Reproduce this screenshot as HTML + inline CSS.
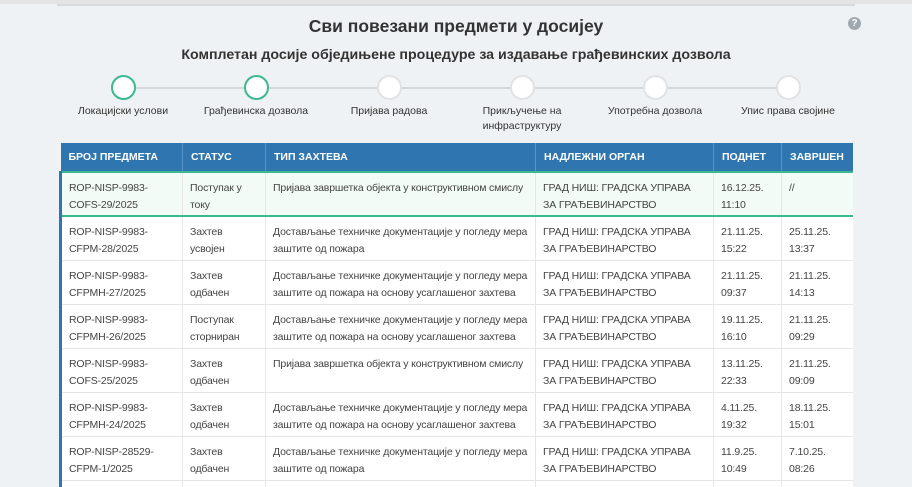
<!DOCTYPE html>
<html><head><meta charset="utf-8"><style>
*{box-sizing:border-box;margin:0;padding:0}
html,body{width:912px;height:487px;overflow:hidden}
body{background:#eef2f5;font-family:"Liberation Sans",sans-serif;color:#333;position:relative}
.top{position:absolute;left:0;top:0;width:912px;height:4px;background:#e4e4e4}
.top2{position:absolute;left:57px;top:4px;width:798px;height:2px;background:#d8dadd}
h1{position:absolute;top:16px;left:0;width:912px;text-align:center;font-size:17.5px;font-weight:bold;color:#333}
h2{position:absolute;top:47px;left:0;width:912px;text-align:center;font-size:14.2px;font-weight:bold;color:#333}
.help{position:absolute;left:848px;top:17px;width:13px;height:13px;border-radius:50%;background:#a0a8b0;color:#fff;font-size:10px;font-weight:bold;text-align:center;line-height:13px}
.line{position:absolute;top:87px;left:123px;width:665px;height:2px;background:#d5d8db}
.c{position:absolute;top:75px;width:25px;height:25px;border-radius:50%;background:#fff;border:2px solid #e0e3e6}
.c.g{border-color:#3cb891}
.lb{position:absolute;top:104px;width:130px;text-align:center;font-size:10.5px;line-height:15px;color:#333}
.wrap{position:absolute;left:59px;top:143px;width:794px;height:344px;overflow:hidden}
table{width:794px;border-collapse:collapse;font-size:10.5px;letter-spacing:-0.15px;table-layout:fixed}
th{background:#2f76b0;color:#fff;text-align:left;font-weight:bold;height:29px;padding:0 8px;border-right:1px solid #5a93c4;white-space:nowrap;letter-spacing:0}
td{background:#fff;vertical-align:top;padding:0 7px;border:1px solid #e6e6e6;color:#444;white-space:nowrap}
td div{height:43px;overflow:hidden;line-height:17px;padding-top:7px}
tr.a td div{height:42px}
tr.a td{background:#f3fbf7;border-top:2px solid #3cb891;border-bottom:2px solid #3cb891}
tr.a td:last-child{border-right:2px solid #3cb891}
tr td:first-child{border-left:3px solid #2f76b0}
</style></head><body>
<div class="top"></div><div class="top2"></div>
<h1>Сви повезани предмети у досијеу</h1>
<div class="help">?</div>
<h2>Комплетан досије обједињене процедуре за издавање грађевинских дозвола</h2>
<div class="line"></div>
<div class="c g" style="left:111px"></div>
<div class="c g" style="left:244px"></div>
<div class="c" style="left:377px"></div>
<div class="c" style="left:510px"></div>
<div class="c" style="left:643px"></div>
<div class="c" style="left:776px"></div>
<div class="lb" style="left:58px">Локацијски услови</div>
<div class="lb" style="left:191px">Грађевинска дозвола</div>
<div class="lb" style="left:324px">Пријава радова</div>
<div class="lb" style="left:457px">Прикључење на<br>инфраструктуру</div>
<div class="lb" style="left:590px">Употребна дозвола</div>
<div class="lb" style="left:723px">Упис права својине</div>
<div class="wrap">
<table>
<colgroup><col style="width:122px"><col style="width:83px"><col style="width:270px"><col style="width:178px"><col style="width:68px"><col style="width:73px"></colgroup>
<tr><th>БРОЈ ПРЕДМЕТА</th><th>СТАТУС</th><th>ТИП ЗАХТЕВА</th><th>НАДЛЕЖНИ ОРГАН</th><th>ПОДНЕТ</th><th>ЗАВРШЕН</th></tr>
<tr class="a"><td><div>ROP-NISP-9983-<br>COFS-29/2025</div></td><td><div>Поступак у<br>току</div></td><td><div>Пријава завршетка објекта у конструктивном смислу</div></td><td><div>ГРАД НИШ: ГРАДСКА УПРАВА<br>ЗА ГРАЂЕВИНАРСТВО</div></td><td><div>16.12.25.<br>11:10</div></td><td><div>//</div></td></tr>
<tr><td><div>ROP-NISP-9983-<br>CFPM-28/2025</div></td><td><div>Захтев<br>усвојен</div></td><td><div>Достављање техничке документације у погледу мера<br>заштите од пожара</div></td><td><div>ГРАД НИШ: ГРАДСКА УПРАВА<br>ЗА ГРАЂЕВИНАРСТВО</div></td><td><div>21.11.25.<br>15:22</div></td><td><div>25.11.25.<br>13:37</div></td></tr>
<tr><td><div>ROP-NISP-9983-<br>CFPMH-27/2025</div></td><td><div>Захтев<br>одбачен</div></td><td><div>Достављање техничке документације у погледу мера<br>заштите од пожара на основу усаглашеног захтева</div></td><td><div>ГРАД НИШ: ГРАДСКА УПРАВА<br>ЗА ГРАЂЕВИНАРСТВО</div></td><td><div>21.11.25.<br>09:37</div></td><td><div>21.11.25.<br>14:13</div></td></tr>
<tr><td><div>ROP-NISP-9983-<br>CFPMH-26/2025</div></td><td><div>Поступак<br>сторниран</div></td><td><div>Достављање техничке документације у погледу мера<br>заштите од пожара на основу усаглашеног захтева</div></td><td><div>ГРАД НИШ: ГРАДСКА УПРАВА<br>ЗА ГРАЂЕВИНАРСТВО</div></td><td><div>19.11.25.<br>16:10</div></td><td><div>21.11.25.<br>09:29</div></td></tr>
<tr><td><div>ROP-NISP-9983-<br>COFS-25/2025</div></td><td><div>Захтев<br>одбачен</div></td><td><div>Пријава завршетка објекта у конструктивном смислу</div></td><td><div>ГРАД НИШ: ГРАДСКА УПРАВА<br>ЗА ГРАЂЕВИНАРСТВО</div></td><td><div>13.11.25.<br>22:33</div></td><td><div>21.11.25.<br>09:09</div></td></tr>
<tr><td><div>ROP-NISP-9983-<br>CFPMH-24/2025</div></td><td><div>Захтев<br>одбачен</div></td><td><div>Достављање техничке документације у погледу мера<br>заштите од пожара на основу усаглашеног захтева</div></td><td><div>ГРАД НИШ: ГРАДСКА УПРАВА<br>ЗА ГРАЂЕВИНАРСТВО</div></td><td><div>4.11.25.<br>19:32</div></td><td><div>18.11.25.<br>15:01</div></td></tr>
<tr><td><div>ROP-NISP-28529-<br>CFPM-1/2025</div></td><td><div>Захтев<br>одбачен</div></td><td><div>Достављање техничке документације у погледу мера<br>заштите од пожара</div></td><td><div>ГРАД НИШ: ГРАДСКА УПРАВА<br>ЗА ГРАЂЕВИНАРСТВО</div></td><td><div>11.9.25.<br>10:49</div></td><td><div>7.10.25.<br>08:26</div></td></tr>
<tr><td><div></div></td><td><div></div></td><td><div></div></td><td><div></div></td><td><div></div></td><td><div></div></td></tr>
</table>
</div>
</body></html>
